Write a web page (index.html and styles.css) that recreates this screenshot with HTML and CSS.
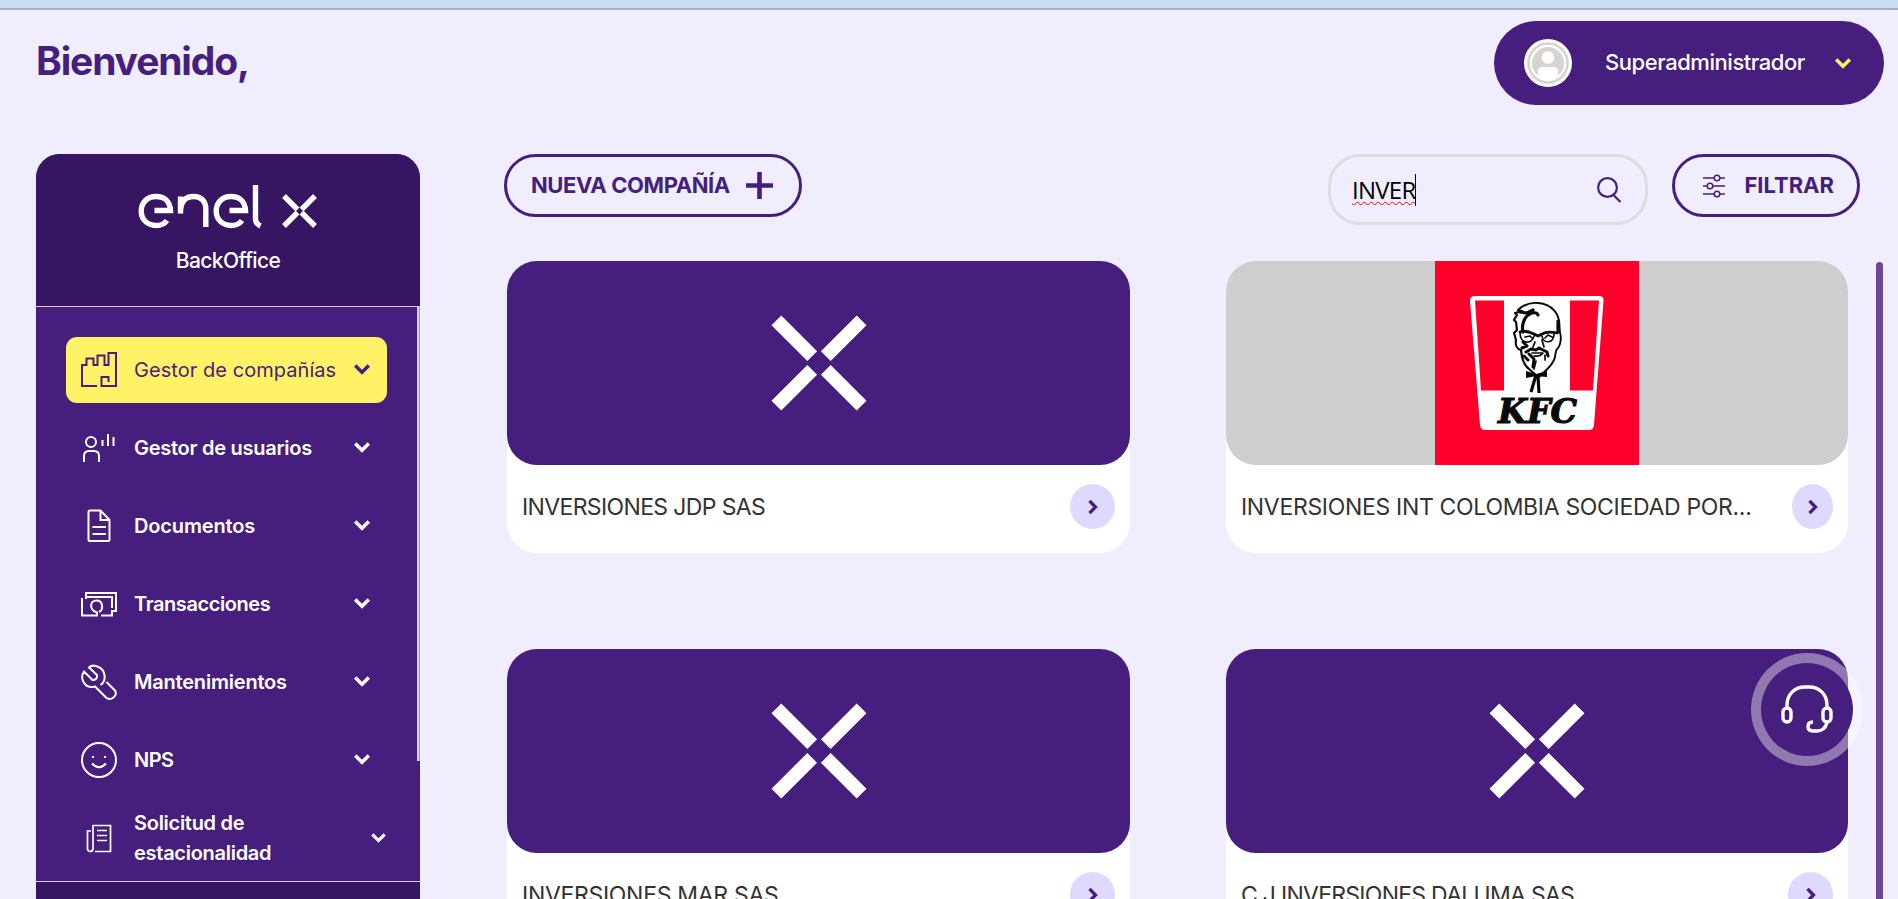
FILE: index.html
```html
<!DOCTYPE html>
<html lang="es">
<head>
<meta charset="utf-8">
<title>Enel X BackOffice</title>
<link rel="stylesheet" href="styles.css">
</head>
<body>
<svg class="defs" width="0" height="0">
  <symbol id="x-mark" viewBox="0 0 96 96"><path d="M5.400 5.400L41.200 41.200M90.600 5.400L54.800 41.200M5.400 90.600L41.200 54.800M90.600 90.600L54.800 54.800" fill="none" stroke="#fff" stroke-width="13.800"/></symbol>
  <symbol id="chev" viewBox="0 0 16 11"><path d="M1.200 1.500L8 8.300L14.800 1.500" fill="none" stroke="currentColor" stroke-width="3.500"/></symbol>
  <symbol id="go" viewBox="0 0 10 16"><path d="M1.500 1.800L7.500 8L1.500 14.200" fill="none" stroke="#461e7d" stroke-width="3.300"/></symbol>
</svg>
<div class="topbar"></div>
<header class="header">
  <h1 class="title"><span>Bienvenido,</span></h1>
  <div class="user">
    <svg class="avatar" viewBox="0 0 48 48"><circle cx="24" cy="24" r="24" fill="#fff"/><circle cx="24" cy="24" r="19.500" fill="none" stroke="#d6d3d1" stroke-width="2.600"/><circle cx="24" cy="24" r="16" fill="#d6d3d1"/><circle cx="24" cy="18.500" r="6.300" fill="#fff"/><path d="M14 36V33Q14 28 19 28H29Q34 28 34 33V36Q29 41 24 41Q19 41 14 36Z" fill="#fff"/></svg>
    <span class="user-name">Superadministrador</span>
    <svg class="chev yellow"><use href="#chev"/></svg>
  </div>
</header>
<div class="layout">
  <aside class="sidebar">
    <div class="brand">
      <svg class="logo" viewBox="0 0 180 46" fill="none" stroke="#fff" stroke-width="5.400"><path d="M16.500 26.500H32.500C32 17 26 12.500 18 12.500C9 12.500 3.200 19 3.200 27C3.200 35.500 9.500 41.500 18 41.500C23 41.500 26.500 40 29 36.500"/><path d="M42.500 29.500V12.500M42.500 28C42.500 17 48 12.500 55.500 12.500C63.500 12.500 67.800 17.500 67.800 25V43"/><path d="M91.500 26.500H107.500C107 17 101 12.500 93 12.500C84 12.500 78.200 19 78.200 27C78.200 35.500 84.500 41.500 93 41.500C98 41.500 101.500 40 104 36.500"/><path d="M117.500 1V35Q117.500 39.500 122.500 42"/><path d="M146 12L159.500 25.500M177 12L163.500 25.500M146 42L159.500 28.500M177 42L163.500 28.500"/></svg>
      <div class="brand-sub">BackOffice</div>
    </div>
    <nav class="menu">
      <div class="item active"><svg class="icon" viewBox="0 0 36 36"><path d="M16 34H1V13H5.500V6.500H12.500V13H16.500V3.500H23.500V13H27.500V1H35V34H20.500V25H27.500V30"/></svg><span class="label t1">Gestor de compañías</span><svg class="chev"><use href="#chev"/></svg></div>
      <div class="item"><svg class="icon" viewBox="0 0 36 36"><circle cx="10" cy="12" r="5"/><path d="M3 32V26Q3 21 8 21H13Q18 21 18 26V32M21.500 10V16M27 4V16M32.500 7V16"/></svg><span class="label t2">Gestor de usuarios</span><svg class="chev"><use href="#chev"/></svg></div>
      <div class="item"><svg class="icon" viewBox="0 0 36 36"><path d="M9 2.500H19.500L28.500 12V31.500Q28.500 33 27 33H9Q7.500 33 7.500 31.500V4Q7.500 2.500 9 2.500ZM19.500 2.500V12H28.500M11.500 19H25M11.500 26H25"/></svg><span class="label t3">Documentos</span><svg class="chev"><use href="#chev"/></svg></div>
      <div class="item"><svg class="icon" viewBox="0 0 36 36"><path d="M1 12V29.500H16V26.500C8 24 8.500 14.500 15.500 14.500C22.500 14.500 22.500 24 18 26M5 13V7H35V25H31V29.500H20M5 11H31V22"/></svg><span class="label t4">Transacciones</span><svg class="chev"><use href="#chev"/></svg></div>
      <div class="item"><svg class="icon" viewBox="0 0 36 36"><path d="M19.500 21C26 17 24.500 6 17.500 3C13.500 1 10 1.500 8 3.500L16 11Q16.500 16 11.500 16L3 7.500C-2 15 4.500 25.500 14 22.500L25 33.500C30 38 38 31 33.500 26L25.500 18"/></svg><span class="label t5">Mantenimientos</span><svg class="chev"><use href="#chev"/></svg></div>
      <div class="item"><svg class="icon" viewBox="0 0 36 36"><circle cx="18" cy="18" r="17"/><path d="M11 21.500Q18 29 25 21.500M11 15H13M23 15H25"/></svg><span class="label t6">NPS</span><svg class="chev"><use href="#chev"/></svg></div>
      <div class="item last"><svg class="icon thin" viewBox="0 0 36 36"><path d="M14 31.500H29.500V5.500H12V29Q11.500 31.500 9 31.500Q6.500 31 6.500 28.500V11H10M16 10.500H26M16 15.500H26M16 20.500H26"/></svg><span class="label t7">Solicitud de<br>estacionalidad</span><svg class="chev small"><use href="#chev"/></svg></div>
    </nav>
    <div class="side-foot"></div>
    <div class="side-scroll"></div>
  </aside>
  <main class="main">
    <div class="tools">
      <button class="btn new"><span class="new-text">NUEVA COMPAÑÍA</span><svg width="27" height="27" viewBox="0 0 27 27"><path d="M13.500 0V27M0 13.500H27" stroke="#461e7d" stroke-width="4.600"/></svg></button>
      <div class="search"><div class="query"><span class="query-text">INVER</span><i class="caret"></i></div>
        <svg class="lens" width="25" height="26" viewBox="0 0 25 26" fill="none" stroke="#461e7d" stroke-width="2.200"><circle cx="10.500" cy="10.500" r="9.400"/><path d="M16.500 18L23.500 25"/></svg></div>
      <button class="btn filter"><svg width="24" height="24" viewBox="0 0 24 24" fill="none" stroke="#461e7d" stroke-width="1.500"><path d="M1 4H12M18 4H23M1 12H5M11 12H23M1 20H12M18 20H23"/><circle cx="15" cy="4" r="2.800"/><circle cx="8" cy="12" r="2.800"/><circle cx="15" cy="20" r="2.800"/></svg><span class="filter-text">FILTRAR</span></button>
    </div>
    <div class="list">
      <div class="grid">
        <article class="card"><div class="cover"><svg class="mark"><use href="#x-mark"/></svg></div><div class="info"><span class="name n1">INVERSIONES JDP SAS</span><span class="go"><svg width="10" height="16"><use href="#go"/></svg></span></div></article>
        <article class="card"><div class="cover grey">
          <svg width="204" height="204" viewBox="0 0 204 204"><rect width="204" height="204" fill="#ff002b"/>
          <path d="M40 35H164Q169 35 168.500 40L159 164Q158.500 169 154 169H50Q45.500 169 45 164L35 40Q35 35 40 35Z" fill="#fff"/>
          <path d="M40 39.500H69V129.500H46ZM135 39.500H164L158 129.500H135Z" fill="#ff002b"/>
          <g fill="none" stroke="#0a0a0a" stroke-linecap="round" stroke-linejoin="round">
            <path stroke-width="1.900" d="M83 49C89 43 97 41.500 103 42C118 43 125 54 124.500 66L125 72C127 77 125 86 122 88C120 90 121 95 119 99C116 105 113 108 108 112L104 116"/>
            <path stroke-width="2.200" d="M82 69L81 61L79 59L82 54L80 52L87 50L83 49M82 69L79 72L81 79C80 84 82 88 86 89C87 97 88 103 94 108L102 115"/>
            <path stroke-width="3.200" d="M85 51L92 52L98 49M88 71C86 63 90 54 97 52Q102 51 103 54M123 60V71"/>
            <path stroke-width="2.800" d="M85 71C90 69 95 71 99 73L103 75L107 73C112 70 118 71 122 72"/>
            <path stroke-width="1.700" d="M85 72C85 83 97 84 99 75M107 75C108 83 119 83 119 73M90 76L95 75L97 77M110 77L113 74L117 76M100 81L98 86M107 79L109 86"/>
            <path stroke-width="3" d="M91 91L96 88L101 89L104 87L108 89L112 91L113 95M88 81L92 85L87 87M94 93L99 98L98 106M89 95L93 99"/>
            <path stroke-width="1.700" d="M97 92H108Q105 96 99 95M110 94V99M101 100L99 108"/>
          </g>
          <path d="M91 110L101 113L112 110V116L101 115L91 117Z" fill="#0a0a0a"/><path d="M101 114L96 131M103 115L104 132" stroke="#0a0a0a" stroke-width="3.200"/>
          <text class="kfc" x="63" y="162" textLength="79" lengthAdjust="spacingAndGlyphs">KFC</text></svg>
        </div><div class="info"><span class="name n2">INVERSIONES INT COLOMBIA SOCIEDAD POR...</span><span class="go narrow"><svg width="10" height="16"><use href="#go"/></svg></span></div></article>
        <article class="card"><div class="cover"><svg class="mark"><use href="#x-mark"/></svg></div><div class="info"><span class="name n3">INVERSIONES MAR SAS</span><span class="go"><svg width="10" height="16"><use href="#go"/></svg></span></div></article>
        <article class="card"><div class="cover"><svg class="mark"><use href="#x-mark"/></svg></div><div class="info"><span class="name n4">C J INVERSIONES DALUMA SAS</span><span class="go"><svg width="10" height="16"><use href="#go"/></svg></span></div></article>
      </div>
      <div class="scroll"></div>
    </div>
  </main>
</div>
<div class="help"><svg width="52" height="48" viewBox="0 0 52 48" fill="none" stroke="#fff" stroke-width="3.400"><path d="M6 22V20C6 9 14 2 24 2H28C38 2 46 9 46 20V22M46 38C44 44 41 46 36 46H32Q27 46 27 41.500Q27 37 32 37"/><rect x="2" y="23" width="8" height="14" rx="4"/><rect x="42" y="23" width="8" height="14" rx="4"/></svg></div>
</body>
</html>
```
FILE: styles.css
```css
* { box-sizing: border-box; }
html, body { height: 100%; }
body { margin: 0; overflow: hidden; background: #f0edff; font-family: Inter, sans-serif; color: #461e7d; }
svg { display: block; flex: none; }
.defs { position: absolute; }
span { white-space: nowrap; }
.topbar { height: 10px; background: #cbdcf5; border-bottom: 2px solid #a4b0cc; }
.header { display: flex; justify-content: space-between; padding: 11px 14px 0 36px; height: 144px; }
.title { margin: 15px 0 0; font-size: 39px; line-height: 50px; font-weight: 700; letter-spacing: -1.15px; }
.user { width: 390px; height: 84px; border-radius: 42px; background: #461e7d; display: flex; align-items: center; padding: 0 33px 0 30px; color: #fff; }
.avatar { width: 48px; height: 48px; }
.user-name { margin-left: 33px; padding-bottom: 2px; font-size: 22px; font-weight: 500; width: 201px; letter-spacing: -.45px; }
.user .chev { margin-left: auto; }
.chev { width: 16px; height: 11px; }
.yellow { color: #fff266; }
.layout { display: flex; padding-left: 36px; height: 745px; }
.sidebar { position: relative; width: 384px; background: #461e7d; border-radius: 24px 24px 0 0; overflow: hidden; display: flex; flex-direction: column; }
.brand { height: 153px; background: #361563; border-bottom: 1px solid #d5cdda; display: flex; flex-direction: column; align-items: center; padding: 30px 0 0; }
.logo { width: 180px; height: 46px; }
.brand-sub { margin-top: 16px; color: #fff; font-size: 21px; font-weight: 500; line-height: 30px; letter-spacing: -.6px; }
.menu { flex: 1; padding: 30px 33px 0 30px; display: flex; flex-direction: column; gap: 12px; color: #fff; }
.item { height: 66px; flex: none; display: flex; align-items: center; padding: 0 17px 0 15px; border-radius: 11px; }
.icon { width: 36px; height: 36px; margin-right: 17px; fill: none; stroke: currentColor; stroke-width: 2; }
.thin { stroke-width: 1.700; }
.label { font-size: 20px; line-height: 30px; font-weight: 600; letter-spacing: -.5px; }
.t2 { letter-spacing: -.26px; }
.t3 { letter-spacing: -.16px; }
.t4 { letter-spacing: -.42px; }
.t5 { letter-spacing: -.2px; }
.t7 { letter-spacing: -.28px; }
.item .chev { margin-left: auto; margin-bottom: 1px; }
.active { background: #fff266; color: #461e7d; }
.active .label { font-weight: 400; letter-spacing: .05px; }
.last { padding-right: 0; }
.last .small { width: 15px; height: 10px; margin-right: 1px; }
.side-foot { height: 18px; background: #361563; border-top: 1px solid #d5cdda; }
.side-scroll { position: absolute; right: 0; top: 153px; width: 3px; height: 454px; background: #d9d2e2; border-right: 1px solid #a48fbe; }
.main { flex: 1; padding-left: 84px; display: flex; flex-direction: column; }
.tools { display: flex; height: 107px; padding-right: 38px; align-items: flex-start; }
.btn { height: 63px; border: 3px solid #461e7d; border-radius: 32px; background: transparent; color: #461e7d; font: 700 22px Inter, sans-serif; display: flex; align-items: center; padding: 0 25px; }
.new { width: 298px; justify-content: space-between; padding: 0 26px 0 24px; }
.new-text { letter-spacing: -.4px; padding-bottom: 1px; }
.search { margin-left: auto; width: 320px; height: 71px; border: 3px solid #ddd; border-radius: 32px; display: flex; align-items: center; justify-content: space-between; padding: 0 23px 0 21px; }
.query { display: flex; align-items: center; height: 32px; }
.query-text { font: 400 24px/32px "Open Sans", sans-serif; letter-spacing: -.75px; color: #000; text-decoration: underline wavy #f00 1.4px; text-underline-offset: 2px; }
.caret { width: 1px; height: 32px; background: #000; }
.filter { margin-left: 24px; width: 188px; padding: 0 23px 0 27px; justify-content: space-between; }
.filter-text { padding-bottom: 1px; }
.list { display: flex; justify-content: space-between; flex: 1; padding: 0 15px 0 3px; min-height: 0; }
.grid { width: 1341px; display: grid; grid-template-columns: 623px 622px; column-gap: 96px; grid-auto-rows: 292px; row-gap: 96px; }
.card { background: #fff; border-radius: 30px; height: 292px; }
.cover { height: 204px; background: #461e7d; border-radius: 30px; display: flex; align-items: center; justify-content: center; overflow: hidden; }
.grey { background: #cecece; }
.mark { width: 96px; height: 96px; }
.info { display: flex; justify-content: space-between; align-items: center; padding: 19px 15px 0; height: 64px; }
.name { font-size: 23px; color: #333; letter-spacing: -.5px; }
.n1 { letter-spacing: -.63px; }
.n2 { letter-spacing: -.32px; }
.n3 { letter-spacing: -.3px; }
.n4 { letter-spacing: -.73px; }
.go { width: 45px; height: 45px; border-radius: 50%; background: #dfd9ff; display: flex; align-items: center; justify-content: center; }
.narrow { width: 41px; }
.kfc { font: italic 700 34px "DejaVu Serif", serif; fill: #0a0a0a; stroke: #0a0a0a; stroke-width: 1.200px; }
.scroll { width: 7px; background: #6a4797; border-radius: 4px 4px 0 0; margin-top: 1px; }
.help { position: absolute; left: 1751px; top: 653px; width: 112px; height: 113px; border-radius: 50%; border: 10.500px solid rgba(255,255,255,.4); background: #461e7d; background-clip: padding-box; display: flex; align-items: center; justify-content: center; }
.help svg { margin: 0 1px 2px 0; }
```
